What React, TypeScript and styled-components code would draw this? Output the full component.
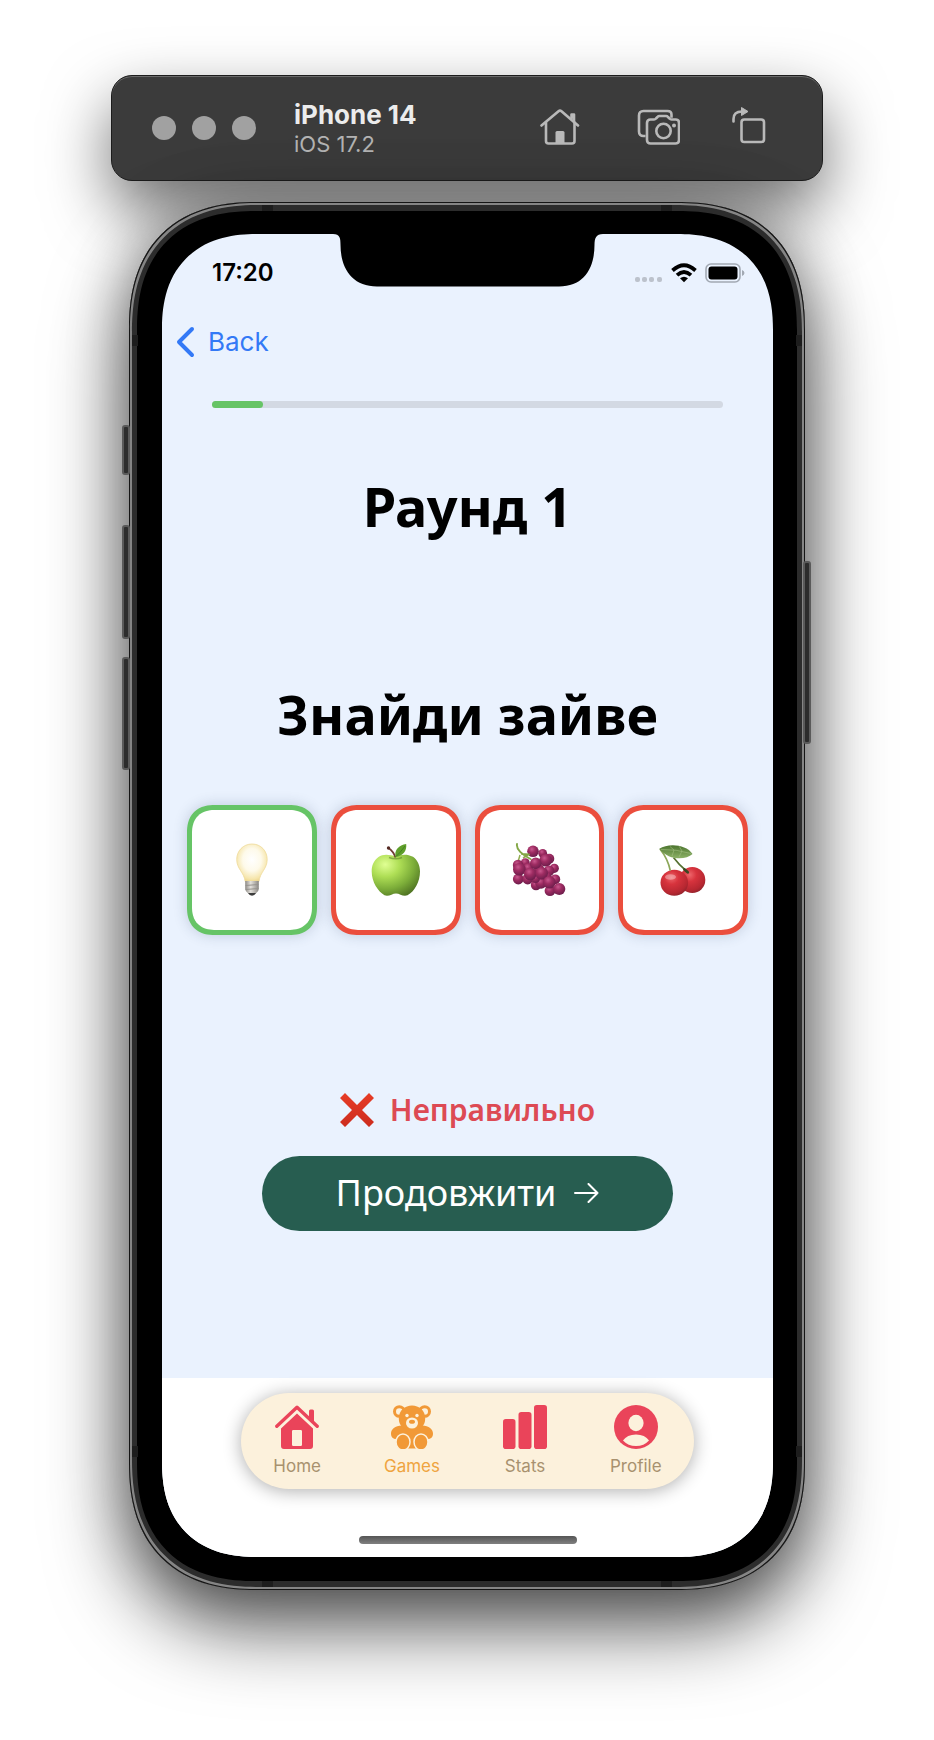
import React from 'react';
import styled, { createGlobalStyle, css } from 'styled-components';

const ui = `Inter, "Liberation Sans", sans-serif`;
const playful = `"Noto Sans", "Open Sans", sans-serif`;

/* Continuous corners where the browser has them, plain round ones elsewhere. */
const smoothCorners = (round: number, smooth: number) => css`
  border-radius: ${round}px;
  @supports (corner-shape: superellipse(1.25)) {
    border-radius: ${smooth}px;
    corner-shape: superellipse(1.25);
  }
`;

const GlobalStyle = createGlobalStyle`
  *, *::before, *::after { box-sizing: border-box; }
  body { margin: 0; background: #fff; font-family: ${ui}; }
  button { border: 0; padding: 0; background: none; font: inherit; color: inherit; cursor: pointer; }
  a { color: inherit; text-decoration: none; }
  h1, h2, p { margin: 0; }
  svg { display: block; }
`;

const Page = styled.main`
  display: flex;
  flex-direction: column;
  align-items: center;
  gap: 21px;
  padding: 75px 12px 150px;
  overflow: hidden;
`;

const Toolbar = styled.header`
  display: flex;
  align-items: center;
  width: 100%;
  max-width: 712px;
  height: 106px;
  padding: 0 56px 0 40px;
  border: 1px solid #1c1c1c;
  border-radius: 21px;
  background: #3b3b3b;
  box-shadow: inset 0 1px 0 #6a6a6a, 0 28px 64px rgba(0, 0, 0, 0.56);
`;

const WindowDots = styled.div`
  display: flex;
  gap: 16px;
  margin-right: 38px;
`;

const WindowDot = styled.button`
  width: 24px;
  height: 24px;
  border-radius: 50%;
  background: #a1a1a1;
`;

const DeviceInfo = styled.div`
  flex: 1;
`;

const DeviceName = styled.h1`
  font-size: 26px;
  line-height: 32px;
  font-weight: 700;
  color: #ececec;
`;

const DeviceOs = styled.p`
  font-size: 22px;
  line-height: 26px;
  color: #b3b3b3;
`;

const ToolbarActions = styled.div`
  display: flex;
  align-items: center;
  gap: 52px;
  padding-bottom: 2px;
  color: #b9b9b9;
`;

const Phone = styled.section`
  position: relative;
  width: 100%;
  max-width: 676px;
  padding: 9px 8px;
  ${smoothCorners(112, 128)}
  background: #2c2c2c;
  box-shadow: inset 0 0 0 1px #151515, inset 0 0 0 3px #858585,
    0 36px 80px rgba(0, 0, 0, 0.66), 0 0 60px rgba(0, 0, 0, 0.28);
`;

const SideButton = styled.span<{ $side: 'left' | 'right'; $top: number; $length: number }>`
  position: absolute;
  ${(p) => p.$side}: ${(p) => (p.$side === 'left' ? -7 : -6)}px;
  top: ${(p) => p.$top}px;
  width: 8px;
  height: ${(p) => p.$length}px;
  border: 2px solid #5a5a5a;
  border-radius: 3px;
  background: #2c2c2c;
`;

type Edge = 'top' | 'bottom' | 'left' | 'right';

const AntennaBand = styled.span<{ $edge: Edge; $from: Edge }>`
  position: absolute;
  ${(p) => p.$edge}: 3px;
  ${(p) => p.$from}: 133px;
  width: ${(p) => (p.$edge === 'top' || p.$edge === 'bottom' ? 11 : 6)}px;
  height: ${(p) => (p.$edge === 'top' || p.$edge === 'bottom' ? 6 : 11)}px;
  background: #1d1d1d;
`;

const Bezel = styled.div`
  padding: 23px 24px 24px 25px;
  ${smoothCorners(104, 119)}
  background: #000;
`;

const Screen = styled.div`
  position: relative;
  overflow: hidden;
  ${smoothCorners(82, 96)}
  background: #eaf2fe;
`;

const NotchShape = styled.svg`
  position: absolute;
  top: 0;
  left: 50%;
  margin-left: -135px;
`;

const StatusBar = styled.div`
  display: flex;
  align-items: center;
  justify-content: space-between;
  height: 78px;
  padding: 0 28px 0 50px;
`;

const Clock = styled.time`
  font-size: 24px;
  line-height: 28px;
  font-weight: 600;
`;

const StatusIcons = styled.div`
  display: flex;
  align-items: center;
  gap: 8px;
`;

const NavRow = styled.div`
  display: flex;
  align-items: center;
  height: 60px;
  padding-left: 14px;
`;

const BackButton = styled.button`
  display: flex;
  align-items: center;
  gap: 12px;
  font-size: 26px;
  line-height: 32px;
  color: #3379f6;
`;

const Game = styled.div`
  display: flex;
  flex-direction: column;
  align-items: center;
  padding: 29px 25px 147px;
`;

const Track = styled.div`
  align-self: stretch;
  height: 7px;
  margin: 0 25px;
  border-radius: 4px;
  background: #d3d9e3;
`;

const TrackFill = styled.div`
  height: 100%;
  border-radius: 4px;
  background: #66c466;
`;

const Heading = styled.h2`
  font-family: ${playful};
  font-size: 54px;
  line-height: 72px;
  font-weight: 700;
  color: #000;
  white-space: nowrap;
`;

const RoundTitle = styled(Heading)`
  margin-top: 62px;
`;

const TaskTitle = styled(Heading)`
  margin-top: 136px;
`;

const Cards = styled.div`
  display: grid;
  grid-template-columns: repeat(4, 1fr);
  align-self: stretch;
  gap: 14px;
  margin-top: 55px;
`;

const Card = styled.button<{ $correct?: boolean }>`
  display: flex;
  align-items: center;
  justify-content: center;
  aspect-ratio: 1;
  border: 5px solid ${(p) => (p.$correct ? '#66c466' : '#eb4e3d')};
  ${smoothCorners(24, 28)}
  background: #fff;
  box-shadow: 0 0 14px rgba(40, 60, 90, 0.22);
`;

const Verdict = styled.p`
  display: flex;
  align-items: center;
  gap: 16px;
  margin-top: 153px;
  font-family: ${playful};
  font-size: 30px;
  line-height: 44px;
  font-weight: 600;
  color: #dd4a54;
`;

const ContinueButton = styled.button`
  display: flex;
  align-items: center;
  justify-content: center;
  gap: 18px;
  width: 411px;
  max-width: 100%;
  height: 75px;
  margin-top: 24px;
  border-radius: 38px;
  background: #275d50;
  font-family: ${playful};
  font-size: 36px;
  line-height: 44px;
  color: #fff;
`;

const Footer = styled.footer`
  display: flex;
  flex-direction: column;
  align-items: center;
  gap: 47px;
  padding: 15px 20px 13px;
  background: #fff;
`;

const TabBar = styled.nav`
  display: flex;
  gap: 63px;
  height: 96px;
  padding: 12px 32px 0;
  border-radius: 48px;
  background: #fcf1dc;
  box-shadow: 0 2px 18px rgba(0, 0, 0, 0.32);
`;

const Tab = styled.a<{ $active?: boolean }>`
  display: flex;
  flex-direction: column;
  align-items: center;
  gap: 6px;
  font-size: 17px;
  line-height: 22px;
  color: ${(p) => (p.$active ? '#efa440' : '#a8916f')};
`;

const HomeIndicator = styled.div`
  width: 218px;
  height: 8px;
  border-radius: 4px;
  background: linear-gradient(#555, #808080);
`;

const HomeOutline = () => (
  <svg width="44" height="36" viewBox="0 0 44 36" fill="none" stroke="currentColor" strokeWidth="2.6" strokeLinecap="round" strokeLinejoin="round">
    <path d="M1.500 16.500 18.500 2.200Q20 1 21.500 2.200L38 16.500" />
    <path d="M6 13.500V32q0 2.500 2.500 2.500h23.500q2.500 0 2.500-2.500V13.500M31.500 9V5.500h2.500v7" />
    <path d="M15.500 34V23.500q0-1.500 1.500-1.500h6q1.500 0 1.500 1.500V34z" fill="currentColor" stroke="none" />
  </svg>
);

const Cameras = () => (
  <svg width="44" height="36" viewBox="0 0 44 36" fill="none" stroke="currentColor" strokeWidth="2.6" strokeLinejoin="round">
    <path d="M9.500 27H7.500Q3 27 3 22.500V6.500Q3 2 7.500 2h24q4 0 4 3.700v3" />
    <path d="M14.500 10.500H18q1.200 0 2-1l1.500-1.500q.8-1 2-1h6.500q1.200 0 2 1l1.500 1.500q.8 1 2 1h4.300q3.200 0 3.200 3.500V31q0 3.500-3.500 3.500h-25Q11 34.500 11 31V14Q11 10.500 14.500 10.500z" />
    <circle cx="27.500" cy="22" r="7.200" />
    <circle cx="38" cy="16.500" r="2" fill="currentColor" stroke="none" />
  </svg>
);

const Rotate = () => (
  <svg width="34" height="42" viewBox="0 0 34 42" fill="none" stroke="currentColor" strokeWidth="2.600" strokeLinejoin="round">
    <rect x="9.500" y="13.500" width="22.500" height="22.500" rx="2.800" />
    <path d="M1.500 15.500V13Q1.500 5.500 10 5.500" strokeLinecap="round" />
    <path d="M9.500 1.500v8l6.500-4z" fill="currentColor" strokeWidth="1" />
  </svg>
);

const Notch = () => (
  <NotchShape width="270" height="53" viewBox="0 0 270 53" aria-hidden="true">
    <path d="M0 0C7 0 7.500 4 7.500 11C7.500 34 19 52.500 44 52.500H226C251 52.500 261.500 34 261.500 11C261.500 4 263 0 270 0z" />
  </NotchShape>
);

const CellDots = () => (
  <svg width="28" height="22" viewBox="0 0 28 22" fill="#bcc2cc" aria-hidden="true">
    {[0, 7, 14, 22].map((x) => (
      <rect key={x} x={x} y="15" width="5" height="5" rx="2" />
    ))}
  </svg>
);

const Wifi = () => (
  <svg width="26" height="20" viewBox="0 0 26 20" fill="none" stroke="#000" strokeWidth="3.800" aria-hidden="true">
    <path d="M1.500 7.500Q13-3 24.500 7.500" />
    <path d="M6 12.200Q13 6 20 12.200" />
    <path d="M13 19.200 9 15.200Q13 12.200 17 15.200z" fill="#000" stroke="none" />
  </svg>
);

const Battery = () => (
  <svg width="40" height="20" viewBox="0 0 40 20" aria-hidden="true">
    <rect x="1" y="1" width="34" height="18" rx="5" fill="none" stroke="#a2a9b3" strokeWidth="1.600" />
    <rect x="3.500" y="3.500" width="29" height="13" rx="3" />
    <path d="M37 7q2.500 1 2.500 3T37 13z" fill="#a2a9b3" />
  </svg>
);

const Chevron = () => (
  <svg width="20" height="32" viewBox="0 0 20 32" fill="none" stroke="currentColor" strokeWidth="4" strokeLinecap="round" strokeLinejoin="round" aria-hidden="true">
    <path d="M16 3 3 16l13 13" />
  </svg>
);

const Bulb = () => (
  <svg width="54" height="54" viewBox="0 0 54 54" role="img" aria-label="лампочка">
    <defs>
      <radialGradient id="glass" cx=".5" cy=".42" r=".6">
        <stop offset="0" stopColor="#fff" />
        <stop offset=".5" stopColor="#fefaea" />
        <stop offset=".85" stopColor="#f6e6ad" />
        <stop offset="1" stopColor="#edd58c" />
      </radialGradient>
      <linearGradient id="cap">
        <stop offset="0" stopColor="#8d8a85" />
        <stop offset=".4" stopColor="#e4e1dc" />
        <stop offset="1" stopColor="#8a8782" />
      </linearGradient>
    </defs>
    <path d="M27 1C18 1 11.700 8 11.700 16.500C11.700 26 19 29 20.200 38.500H34C35 29 42.200 26 42.200 16.500C42.200 8 36 1 27 1z" fill="url(#glass)" stroke="#efdb9a" strokeWidth=".8" />
    <path d="M20.200 38h13.600v8q0 2.500-3 4.500h-7.600q-3-2-3-4.500z" fill="url(#cap)" />
    <path d="M20.500 42.500 33.500 41.500M20.500 46.500 33.500 45.500" stroke="#96938e" strokeWidth="1" />
    <path d="M23 50h8q-1.500 2.800-4 2.800T23 50z" fill="#3c3c3c" />
  </svg>
);

const Apple = () => (
  <svg width="54" height="54" viewBox="0 0 54 54" role="img" aria-label="яблуко">
    <defs>
      <radialGradient id="skin" cx=".28" cy=".24" r=".85">
        <stop offset="0" stopColor="#e0ff93" />
        <stop offset=".35" stopColor="#aede55" />
        <stop offset=".7" stopColor="#7cad39" />
        <stop offset="1" stopColor="#517624" />
      </radialGradient>
    </defs>
    <path d="M26.500 13.500C21 11.500 14 10.500 9.500 14C4.500 18 2.700 22.500 2.700 28.500C2.700 39 9 48.500 15.500 52.300C20 54 23 50.500 27 50.500C31 50.500 34 54 38.500 52.300C45.500 48.500 51 38.500 51 28.500C51 22.500 48.500 17 44 13.800C38 10.500 31.500 11.500 26.500 13.500z" fill="url(#skin)" />
    <path d="M20 14.500Q27 17 33 14.500" fill="none" stroke="#567c27" strokeWidth="1.500" opacity=".55" />
    <path d="M19.500 5Q24.500 8.500 26.500 14.500" fill="none" stroke="#713d35" strokeWidth="1.800" />
    <circle cx="19.500" cy="5" r="1.700" fill="#542923" />
    <path d="M26.500 14C25 7 30 2 37.200 1C38 8 34 13 26.500 14z" fill="#5f9f2b" />
    <path d="M27 13.500Q31 10 36 3" fill="none" stroke="#3d7a1e" strokeWidth=".8" />
  </svg>
);

const berries = [
  [30.7, 10.3, 4.4], [37.3, 15.7, 5], [21, 8.3, 5.8], [13.3, 19.7, 4.5], [6, 22, 5.2],
  [42.3, 25.3, 4.6], [33.7, 17.3, 6.3], [27, 26, 5], [16.3, 25.3, 5.2], [6.3, 36, 5.4], [15.7, 36, 5.4],
  [23.7, 20.3, 5.8], [7.3, 26.3, 6.3], [37, 27.700, 5.3], [24, 42, 5.2], [29, 40, 5.8],
  [23.5, 35.5, 4.5], [35, 33.5, 4.5], [18.3, 31, 6.300], [29.7, 30.3, 6.3], [43.3, 36.300, 4.9],
  [38, 47.7, 5.4], [37.3, 39.3, 6.3], [47.3, 46, 6],
];

const Grapes = () => (
  <svg width="54" height="54" viewBox="0 0 54 54" role="img" aria-label="виноград">
    <defs>
      <radialGradient id="berry" cx=".4" cy=".32" r=".75">
        <stop offset="0" stopColor="#c9588e" />
        <stop offset=".4" stopColor="#9e2c62" />
        <stop offset="1" stopColor="#641a47" />
      </radialGradient>
    </defs>
    <path d="M8 12l-2 7M16 12l-5 3" fill="none" stroke="#91ad52" strokeWidth="1.500" />
    {berries.map(([x, y, r]) => (
      <circle key={`${x}-${y}`} cx={x} cy={y} r={r} fill="url(#berry)" />
    ))}
    <path d="M5 1C4 6 10 12 18.500 16M10 11l7 .5" fill="none" stroke="#83a746" strokeWidth="1.900" strokeLinecap="round" />
  </svg>
);

const Cherries = () => (
  <svg width="54" height="54" viewBox="0 0 54 54" role="img" aria-label="вишні">
    <defs>
      <radialGradient id="cherry" cx=".4" cy=".3" r=".75">
        <stop offset="0" stopColor="#ee666b" />
        <stop offset=".35" stopColor="#d7333d" />
        <stop offset=".8" stopColor="#b62731" />
        <stop offset="1" stopColor="#8c222b" />
      </radialGradient>
      <linearGradient id="leaf" x1="0" y1="0" x2="0" y2="1">
        <stop offset="0" stopColor="#4b742e" />
        <stop offset="1" stopColor="#8db267" />
      </linearGradient>
    </defs>
    <circle cx="36.300" cy="37" r="13" fill="url(#cherry)" />
    <ellipse cx="18.300" cy="39.700" rx="13.800" ry="13" fill="url(#cherry)" />
    <ellipse cx="14.500" cy="34" rx="5.500" ry="2.800" fill="#fff" opacity=".35" />
    <path d="M4 6Q12 16 14.300 27.700" fill="none" stroke="#8ca759" strokeWidth="1.700" />
    <path d="M17.500 14.500Q23 22 31 28.500" fill="none" stroke="#557032" strokeWidth="1.700" />
    <path d="M28.500 26.500l3.200 2.800" stroke="#3b4722" strokeWidth="2.800" strokeLinecap="round" />
    <path d="M3.300 5.700C12 0 30 1 36.500 11C30 17 13 18 3.300 5.700z" fill="url(#leaf)" />
    <path d="M5 6.500Q20 6 35 10.500M14 3.500l4 3.500-2 6M23 3l3 5-3 6" fill="none" stroke="#a2bf82" strokeWidth=".6" />
  </svg>
);

const Cross = () => (
  <svg width="34" height="34" viewBox="0 0 34 34" aria-hidden="true">
    <defs>
      <linearGradient id="cross" x1="0" y1="0" x2="0" y2="1">
        <stop offset="0" stopColor="#e73c26" />
        <stop offset="1" stopColor="#cc2c1e" />
      </linearGradient>
    </defs>
    <path d="M5 0 17 12 29 0 34 5 22 17 34 29 29 34 17 22 5 34 0 29 12 17 0 5z" fill="url(#cross)" />
  </svg>
);

const Arrow = () => (
  <svg width="25" height="20" viewBox="0 0 25 20" fill="none" stroke="currentColor" strokeWidth="2" strokeLinecap="round" strokeLinejoin="round" aria-hidden="true">
    <path d="M1 10h22.500M14.500 1l9 9-9 9" />
  </svg>
);

const HomeTabIcon = () => (
  <svg width="44" height="44" viewBox="0 0 44 44" aria-hidden="true">
    <path d="M34 14V6q0-1.500 1.500-1.500h2Q39 4.500 39 6v12z" fill="#ea445a" />
    <path d="M1.800 21.300 22 2.300l20.200 19" fill="none" stroke="#ea445a" strokeWidth="3.400" strokeLinecap="round" strokeLinejoin="round" />
    <path d="M22 8.500 6 23.500V41q0 3 3 3h26q3 0 3-3V23.500zM18.300 25h7.400q1.300 0 1.300 1.300v13.400q0 1.300-1.300 1.300h-7.400q-1.300 0-1.300-1.300V26.300q0-1.300 1.300-1.300z" fill="#ea445a" fillRule="evenodd" />
  </svg>
);

const BearIcon = () => (
  <svg width="44" height="44" viewBox="0 0 44 44" fill="#f19937" aria-hidden="true">
    <circle cx="9.300" cy="6.500" r="4.800" fill="none" stroke="#f19937" strokeWidth="3" />
    <circle cx="34.700" cy="6.500" r="4.800" fill="none" stroke="#f19937" strokeWidth="3" />
    <path d="M12 20.500C5 20.500 1 24.500 1 28.500C1 33 4 34.500 7.500 34L12 43.500h20l4.500-9.500C40 34.500 43 33 43 28.500C43 24.500 39 20.500 32 20.500z" />
    <path d="M22 .5C15 .5 8.800 5.500 8.800 13.500C8.800 21 14 25.500 22 25.500S35.200 21 35.200 13.500C35.200 5.500 29 .5 22 .5z" />
    <circle cx="17" cy="10.500" r="1.700" fill="#fcf1dc" />
    <circle cx="27" cy="10.500" r="1.700" fill="#fcf1dc" />
    <ellipse cx="22" cy="18" rx="6" ry="5.600" fill="#fcf1dc" />
    <ellipse cx="22" cy="16.700" rx="3" ry="2" />
    <ellipse cx="13" cy="37" rx="7" ry="8" stroke="#fcf1dc" strokeWidth="1.500" />
    <ellipse cx="31" cy="37" rx="7" ry="8" stroke="#fcf1dc" strokeWidth="1.500" />
  </svg>
);

const StatsIcon = () => (
  <svg width="44" height="44" viewBox="0 0 44 44" fill="#ea445a" aria-hidden="true">
    <rect y="14" width="12.500" height="30" rx="2.800" />
    <rect x="15.500" y="7" width="13" height="37" rx="2.800" />
    <rect x="31" width="13" height="44" rx="2.800" />
  </svg>
);

const ProfileIcon = () => (
  <svg width="44" height="44" viewBox="0 0 44 44" aria-hidden="true">
    <circle cx="22" cy="22" r="22" fill="#ea445a" />
    <ellipse cx="22" cy="18" rx="7.600" ry="8.300" fill="#fcf1dc" />
    <path d="M9 35.500Q13 29.500 22 29.500T35 35.500Q30 41 22 41T9 35.500z" fill="#fcf1dc" />
  </svg>
);

const tabs = [
  { label: 'Home', Icon: HomeTabIcon },
  { label: 'Games', Icon: BearIcon, active: true },
  { label: 'Stats', Icon: StatsIcon },
  { label: 'Profile', Icon: ProfileIcon },
];

const bands: [Edge, Edge][] = [
  ['top', 'left'], ['top', 'right'], ['bottom', 'left'], ['bottom', 'right'],
  ['left', 'top'], ['right', 'top'], ['left', 'bottom'], ['right', 'bottom'],
];

export default function App() {
  const progress = 10;
  return (
    <>
      <GlobalStyle />
      <Page lang="uk">
        <Toolbar>
          <WindowDots>
            <WindowDot aria-label="Close" />
            <WindowDot aria-label="Minimize" />
            <WindowDot aria-label="Zoom" />
          </WindowDots>
          <DeviceInfo>
            <DeviceName>iPhone 14</DeviceName>
            <DeviceOs>iOS 17.2</DeviceOs>
          </DeviceInfo>
          <ToolbarActions>
            <button aria-label="Home"><HomeOutline /></button>
            <button aria-label="Screenshot"><Cameras /></button>
            <button aria-label="Rotate"><Rotate /></button>
          </ToolbarActions>
        </Toolbar>

        <Phone>
          <SideButton $side="left" $top={223} $length={50} />
          <SideButton $side="left" $top={323} $length={114} />
          <SideButton $side="left" $top={455} $length={113} />
          <SideButton $side="right" $top={359} $length={183} />
          <Bezel>
            <Screen>
              <Notch />
              <StatusBar>
                <Clock>17:20</Clock>
                <StatusIcons>
                  <CellDots />
                  <Wifi />
                  <Battery />
                </StatusIcons>
              </StatusBar>
              <NavRow>
                <BackButton><Chevron />Back</BackButton>
              </NavRow>
              <Game>
                <Track role="progressbar" aria-label="Раунд" aria-valuenow={progress} aria-valuemin={0} aria-valuemax={100}>
                  <TrackFill style={{ width: `${progress}%` }} />
                </Track>
                <RoundTitle>Раунд 1</RoundTitle>
                <TaskTitle>Знайди зайве</TaskTitle>
                <Cards>
                  <Card $correct><Bulb /></Card>
                  <Card><Apple /></Card>
                  <Card><Grapes /></Card>
                  <Card><Cherries /></Card>
                </Cards>
                <Verdict><Cross />Неправильно</Verdict>
                <ContinueButton>Продовжити<Arrow /></ContinueButton>
              </Game>
              <Footer>
                <TabBar>
                  {tabs.map(({ label, Icon, active }) => (
                    <Tab key={label} href={`#${label.toLowerCase()}`} $active={active}>
                      <Icon />
                      {label}
                    </Tab>
                  ))}
                </TabBar>
                <HomeIndicator />
              </Footer>
            </Screen>
          </Bezel>
          {bands.map(([edge, from]) => (
            <AntennaBand key={`${edge}-${from}`} $edge={edge} $from={from} />
          ))}
        </Phone>
      </Page>
    </>
  );
}
